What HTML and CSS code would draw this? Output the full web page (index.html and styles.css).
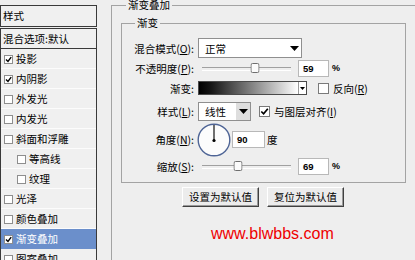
FILE: index.html
```html
<!DOCTYPE html>
<html>
<head>
<meta charset="utf-8">
<link rel="stylesheet" href="styles.css">
</head>
<body>
<div class="win">
  <aside class="side">
    <div class="side-head">样式</div>
    <ul class="side-list">
      <li class="item first">混合选项:默认</li>
      <li class="item"><span class="cb"><svg viewBox="0 0 7 7" width="7" height="7"><path d="M1 3.5 L3 5.5 L6.2 1.2" fill="none" stroke="#000" stroke-width="1.4"/></svg></span>投影</li>
      <li class="item"><span class="cb"><svg viewBox="0 0 7 7" width="7" height="7"><path d="M1 3.5 L3 5.5 L6.2 1.2" fill="none" stroke="#000" stroke-width="1.4"/></svg></span>内阴影</li>
      <li class="item"><span class="cb"></span>外发光</li>
      <li class="item"><span class="cb"></span>内发光</li>
      <li class="item"><span class="cb"></span>斜面和浮雕</li>
      <li class="item sub"><span class="cb"></span>等高线</li>
      <li class="item sub"><span class="cb"></span>纹理</li>
      <li class="item"><span class="cb"></span>光泽</li>
      <li class="item"><span class="cb"></span>颜色叠加</li>
      <li class="item sel"><span class="cb"><svg viewBox="0 0 7 7" width="7" height="7"><path d="M1 3.5 L3 5.5 L6.2 1.2" fill="none" stroke="#000" stroke-width="1.4"/></svg></span>渐变叠加</li>
      <li class="item"><span class="cb"></span>图案叠加</li>
    </ul>
  </aside>
  <main class="main">
    <fieldset class="grp outer">
      <legend>渐变叠加</legend>
      <fieldset class="grp inner">
        <legend>渐变</legend>
        <div class="form">
          <div class="row r1">
            <span class="lbl">混合模式(<u>O</u>):</span>
            <div class="select wide"><span class="sel-text">正常</span><span class="sel-arrow"><svg width="9" height="5" viewBox="0 0 9 5"><path d="M0 0 H9 L4.5 5 Z" fill="#000"/></svg></span></div>
          </div>
          <div class="row r2">
            <span class="lbl">不透明度(<u>P</u>):</span>
            <div class="slider"><span class="thumb" style="left:59%"><svg width="9" height="10" viewBox="0 0 9 10"><rect x="0.5" y="0.5" width="8" height="9" rx="1.5" fill="#fbfbfb" stroke="#6e6e6e"/></svg></span></div>
            <span class="num">59</span><span class="pct">%</span>
          </div>
          <div class="row r3">
            <span class="lbl">渐变:</span>
            <div class="grad"><span class="grad-fill"></span><span class="grad-arrow"><svg width="5" height="3" viewBox="0 0 5 3"><path d="M0 0 H5 L2.5 3 Z" fill="#000"/></svg></span></div>
            <span class="chk gap-a"></span><span class="clbl">反向(<u>R</u>)</span>
          </div>
          <div class="row r4">
            <span class="lbl">样式(<u>L</u>):</span>
            <div class="select narrow"><span class="sel-text">线性</span><span class="sel-arrow grey"><svg width="9" height="5" viewBox="0 0 9 5"><path d="M0 0 H9 L4.5 5 Z" fill="#000"/></svg></span></div>
            <span class="chk gap-b"><svg viewBox="0 0 9 9" width="9" height="9"><path d="M1.3 4.5 L3.6 6.8 L7.8 1.8" fill="none" stroke="#000" stroke-width="1.7"/></svg></span><span class="clbl">与图层对齐(<u>I</u>)</span>
          </div>
          <div class="row r5">
            <span class="lbl">角度(<u>N</u>):</span>
            <svg class="dial" width="34" height="34" viewBox="0 0 34 34"><circle cx="17" cy="17" r="15.8" fill="#fcfcfc" stroke="#4f6596" stroke-width="1.4"/><line x1="17" y1="17.5" x2="17" y2="2" stroke="#111" stroke-width="1.2"/><circle cx="17" cy="17.5" r="1.6" fill="#000"/></svg>
            <span class="num n90">90</span><span class="deg">度</span>
          </div>
          <div class="row r6">
            <span class="lbl">缩放(<u>S</u>):</span>
            <div class="slider"><span class="thumb" style="left:40%"><svg width="9" height="10" viewBox="0 0 9 10"><rect x="0.5" y="0.5" width="8" height="9" rx="1.5" fill="#fbfbfb" stroke="#6e6e6e"/></svg></span></div>
            <span class="num">69</span><span class="pct">%</span>
          </div>
        </div>
      </fieldset>
      <div class="btns">
        <button class="btn">设置为默认值</button>
        <button class="btn">复位为默认值</button>
      </div>
      <div class="url">www.blwbbs.com</div>
    </fieldset>
  </main>
</div>
</body>
</html>
```
FILE: styles.css
```css
* { box-sizing: border-box; }
html, body { margin: 0; padding: 0; }
body {
  width: 415px;
  height: 260px;
  overflow: hidden;
  background: #eeeeee;
  font-family: "Noto Sans CJK SC", sans-serif;
  font-size: 10.5px;
  color: #000;
}
u { text-decoration: underline; text-underline-offset: 1px; }
.win { display: flex; height: 260px; }

/* left style list */
.side { width: 97px; flex: none; padding-top: 5px; }
.side-head {
  height: 22px;
  border: 1px solid #3a3a3a;
  padding-left: 2px;
  line-height: 20px;
  background: #f0f0f0;
}
.side-list {
  list-style: none;
  margin: 1px 0 0;
  padding: 0;
  border-top: 1px solid #3a3a3a;
  border-right: 1px solid #3a3a3a;
  border-left: 1px solid #3a3a3a;
  background: #f0f0f0;
}
.item {
  height: 20px;
  border-bottom: 1px solid #fcfcfc;
  display: flex;
  align-items: center;
  padding-left: 3px;
  white-space: nowrap;
}
.item.first { border-bottom-color: #3a3a3a; padding-left: 2px; }
.item.sub { padding-left: 16px; }
.item.sel { background: #6b8fcb; color: #fff; border-bottom-color: #6b8fcb; }
.cb {
  width: 9px;
  height: 9px;
  border: 1px solid #8e8e8e;
  background: #fff;
  margin: 2px 3px 0 0;
  flex: none;
  display: flex;
  align-items: center;
  justify-content: center;
}

/* main */
.main { flex: 1; padding-left: 14px; min-width: 0; }
.grp { margin: 0; border: 1px solid #a3a3a3; }
.grp legend { padding: 0 2px; font-size: 10.5px; }
.outer { width: 330px; height: 290px; padding: 0 0 0 0; }
.outer > legend { line-height: 10px; margin-left: 14px; }
.inner { width: 285px; margin: 7px 0 0 9px; padding: 9px 0 5px 0; }
.inner > legend { line-height: 12px; margin-left: 13px; }

.form { display: flex; flex-direction: column; }
.row { display: flex; align-items: center; white-space: nowrap; }
.r1 { height: 20px; }
.r2 { height: 20px; }
.r3 { height: 20px; }
.r4 { height: 26px; }
.r5 { height: 31px; }
.r6 { height: 22px; }
.lbl { width: 72px; text-align: right; margin-right: 4px; flex: none; }

.select {
  height: 20px;
  border: 1px solid #8f8f8f;
  background: #fff;
  display: flex;
  align-items: stretch;
}
.select.wide { width: 104px; }
.select.narrow { width: 53px; height: 19px; }
.sel-text { flex: 1; padding-left: 6px; display: flex; align-items: center; }
.sel-arrow { width: 14px; display: flex; align-items: center; justify-content: center; }
.sel-arrow.grey { background: #dedede; }

.slider { width: 89px; height: 12px; margin-left: 4px; position: relative; flex: none; }
.slider::before {
  content: "";
  position: absolute;
  left: 0; right: 0; top: 5px;
  height: 2px;
  border-top: 1px solid #a0a0a0;
  border-bottom: 1px solid #ffffff;
}
.thumb { position: absolute; top: 1px; transform: translateX(-50%); display: flex; }

.num {
  width: 31px;
  height: 17px;
  margin-left: 7px;
  border: 1px solid #b8b8b8;
  background: #fff;
  padding-left: 4px;
  font-family: "Liberation Sans", sans-serif;
  font-size: 9.5px;
  font-weight: bold;
  line-height: 15px;
  flex: none;
}
.num.n90 { width: 33px; margin-left: 1px; }
.pct { margin-left: 3px; font-family: "Liberation Sans", sans-serif; font-size: 9px; font-weight: bold; }
.deg { margin-left: 2px; }

.grad {
  width: 109px;
  height: 14px;
  border: 1px solid #4a4a4a;
  display: flex;
  flex: none;
}
.grad-fill { flex: 1; background: linear-gradient(to right, #000 0%, #151515 12%, #fff 100%); }
.grad-arrow { width: 8px; background: #fff; border-left: 1px solid #9a9a9a; display: flex; align-items: center; justify-content: center; }

.chk {
  width: 11px;
  height: 11px;
  border: 1px solid #7a7a7a;
  background: #fff;
  flex: none;
  display: flex;
  align-items: center;
  justify-content: center;
}
.gap-a { margin-left: 11px; }
.gap-b { margin-left: 8px; }
.clbl { margin-left: 4px; }
.dial { margin-left: -1px; flex: none; }

.btns { display: flex; gap: 8px; padding-left: 70px; margin-top: 4px; }
.btn {
  width: 77px;
  height: 20px;
  padding: 0;
  background: #ececec;
  border: 1px solid;
  border-color: #ffffff #404040 #404040 #ffffff;
  box-shadow: inset -1px -1px 0 #9a9a9a;
  font-family: "Noto Sans CJK SC", sans-serif;
  font-size: 10.5px;
  color: #000;
  line-height: 16px;
}
.url {
  margin-top: 18px;
  padding-left: 99px;
  font-family: "Liberation Sans", sans-serif;
  font-size: 16px;
  line-height: 18px;
  color: #ee0000;
}
```
